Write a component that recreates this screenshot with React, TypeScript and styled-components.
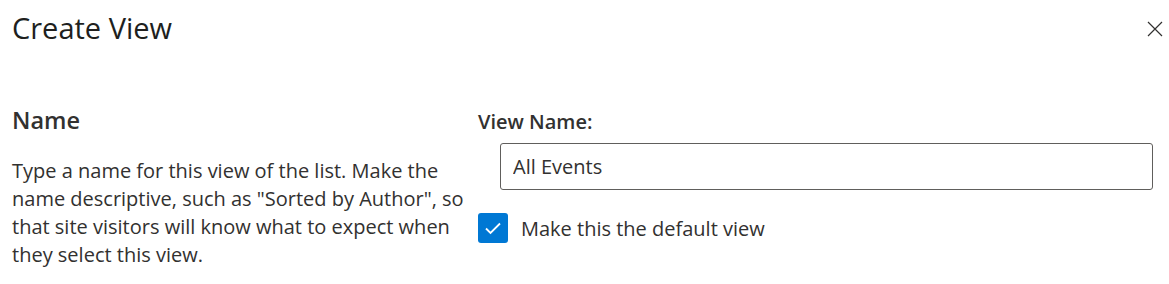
import React from "react";
import styled, { createGlobalStyle } from "styled-components";

const Global = createGlobalStyle`
  html, body { margin: 0; padding: 0; background: #fff; }
  body { font-family: "Open Sans", "Noto Sans", sans-serif; color: #323130; }
`;

const Panel = styled.div`
  width: 1169px;
  height: 284px;
  box-sizing: border-box;
  padding: 0 0 0 12px;
  display: flex;
  flex-direction: column;
`;

const Header = styled.div`
  display: flex;
  align-items: flex-start;
  justify-content: space-between;
  height: 100px;
`;

const Title = styled.h1`
  margin: 9px 0 0 0;
  font-size: 29px;
  font-weight: 400;
  line-height: 38px;
  color: #201f1e;
`;

const CloseButton = styled.button`
  border: none;
  background: transparent;
  padding: 0;
  margin: 21px 6px 0 0;
  width: 16px;
  height: 16px;
  display: flex;
  cursor: pointer;
`;

const Body = styled.div`
  display: flex;
  gap: 0;
`;

const LeftCol = styled.div`
  width: 466px;
  display: flex;
  flex-direction: column;
`;

const SectionTitle = styled.h2`
  margin: 5px 0 0 0;
  font-size: 23.5px;
  font-weight: 600;
  line-height: 30px;
  color: #323130;
`;

const Description = styled.p`
  margin: 22px 0 0 0;
  font-size: 20px;
  line-height: 28px;
  color: #323130;
`;

const RightCol = styled.div`
  flex: 1;
  display: flex;
  flex-direction: column;
  padding-right: 16px;
`;

const FieldLabel = styled.label`
  font-size: 20px;
  font-weight: 600;
  line-height: 28px;
  margin-top: 8px;
`;

const TextInput = styled.input`
  margin: 7px 0 0 22px;
  height: 47px;
  box-sizing: border-box;
  border: 1px solid #605e5c;
  border-radius: 3px;
  padding: 0 12px;
  font-family: inherit;
  font-size: 20px;
  color: #323130;
  outline: none;
`;

const CheckRow = styled.label`
  display: flex;
  align-items: center;
  gap: 13px;
  margin-top: 23px;
  font-size: 20px;
  cursor: pointer;
`;

const CheckBox = styled.span<{ $checked: boolean }>`
  width: 30px;
  height: 30px;
  flex: none;
  border-radius: 3px;
  background: ${(p) => (p.$checked ? "#0078d4" : "#fff")};
  border: ${(p) => (p.$checked ? "none" : "1px solid #323130")};
  display: flex;
  align-items: center;
  justify-content: center;
`;

export default function App() {
  return (
    <>
      <Global />
      <Panel>
        <Header>
          <Title>Create View</Title>
          <CloseButton aria-label="Close">
            <svg width="16" height="16" viewBox="0 0 16 16">
              <path d="M1 1 L15 15 M15 1 L1 15" stroke="#323130" strokeWidth="1.2" fill="none" />
            </svg>
          </CloseButton>
        </Header>
        <Body>
          <LeftCol>
            <SectionTitle>Name</SectionTitle>
            <Description>
              Type a name for this view of the list. Make the name descriptive, such as "Sorted by Author", so that site visitors will know what to expect when they select this view.
            </Description>
          </LeftCol>
          <RightCol>
            <FieldLabel>View Name:</FieldLabel>
            <TextInput defaultValue="All Events" />
            <CheckRow>
              <CheckBox $checked>
                <svg width="30" height="30" viewBox="0 0 30 30">
                  <path d="M8 15.5 L12.5 20 L22 10.5" stroke="#fff" strokeWidth="1.8" fill="none" />
                </svg>
              </CheckBox>
              Make this the default view
            </CheckRow>
          </RightCol>
        </Body>
      </Panel>
    </>
  );
}
